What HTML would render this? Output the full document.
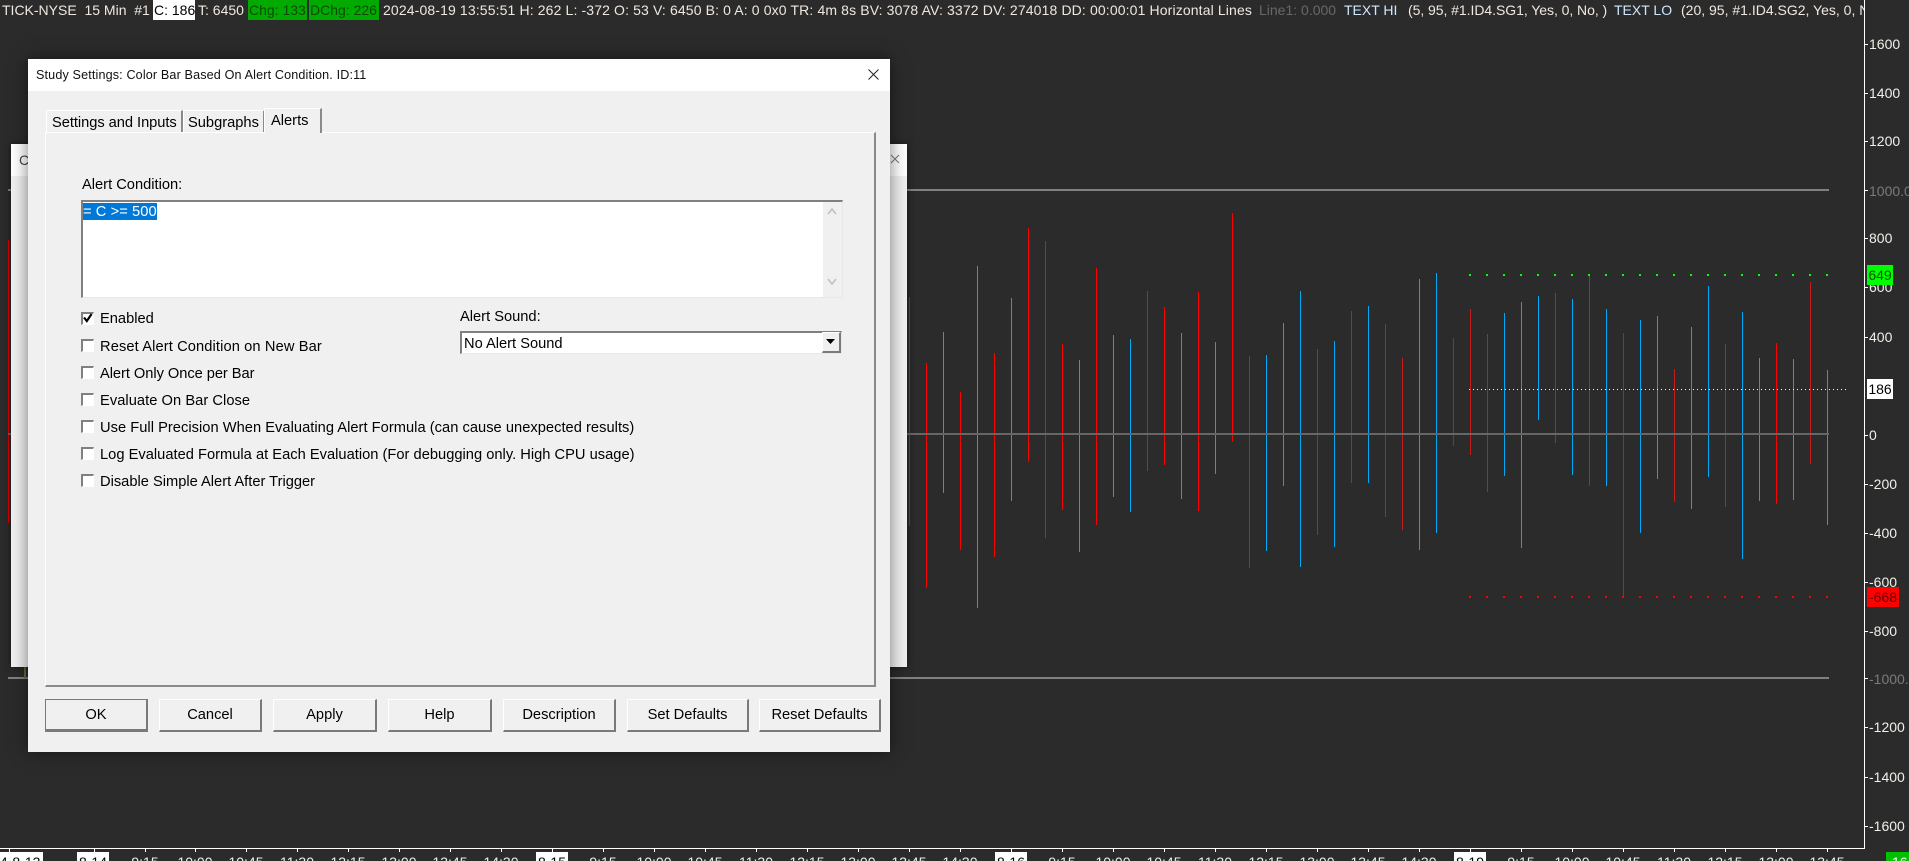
<!DOCTYPE html>
<html><head><meta charset="utf-8"><title>Study Settings</title>
<style>
html,body{margin:0;padding:0;background:#2b2b2b}
#p{position:relative;width:1909px;height:861px;overflow:hidden;background:#2b2b2b;font-family:"Liberation Sans",Arial,sans-serif;font-size:14px;color:#f0e8e0}
.t{position:absolute;white-space:pre;line-height:20px;height:20px}
.x{position:absolute;width:60px;margin-left:-30px;text-align:center;top:0;line-height:20px;color:#eee;height:20px}
.d{position:absolute;top:0;height:20px;background:#fff;color:#000;line-height:20px;text-align:center}
.y{position:absolute;left:1869px;line-height:20px;height:20px;color:#f0f0ea;white-space:pre}
.k{position:absolute;left:1865px;width:3px;height:1px;background:#fff}
.s{position:absolute;top:849px;width:1px;height:3px;background:#fff}
#dlg{position:absolute;left:28px;top:59px;width:862px;height:693px;background:#f0f0f0;box-shadow:0 0 16px rgba(0,0,0,.5);color:#000;font-size:14.67px}
#dlg .t{color:#000}
.l{position:absolute;left:53px;background:#fff;border-top:2px solid #808080;border-left:2px solid #808080;border-bottom:1px solid #fff;border-right:1px solid #fff;box-sizing:content-box;width:10px;height:10px}
.b{position:absolute;top:640px;height:33px;box-sizing:border-box;background:#f0f0f0;border:1px solid #fff;border-right:2px solid #7a7a7a;border-bottom:2px solid #7a7a7a;text-align:center;line-height:31px;white-space:pre}
.tab{position:absolute;box-sizing:border-box;border-top:1px solid #fff;border-left:1px solid #fff;border-right:2px solid #8a8a8a;background:#f0f0f0}
</style></head><body>
<div id="p">

<svg style="position:absolute;left:0;top:0" width="1909" height="861" shape-rendering="crispEdges" fill="none">
<path stroke="#e00000" d="M8.5 240V523"/>
<path stroke="#c81c1c" d="M909.5 297V526M1045.5 241V538M1147.5 291V471M1249.5 356V568M1317.5 349V535M1351.5 311V483M1385.5 324V517M1402.5 358V530M1470.5 309V455M1487.5 334V492M1555.5 293V443M1589.5 276V486M1674.5 369V502M1725.5 344V507M1810.5 282V464"/>
<path stroke="#ff0000" d="M926.5 363V588M960.5 392V550M994.5 353V557M1028.5 228V462M1062.5 344V510M1096.5 268V525M1164.5 307V465M1198.5 292V511M1232.5 213V442M1453.5 338V446M1623.5 333V597M1776.5 343V504"/>
<path stroke="#1a9ee0" d="M943.5 332V493M977.5 266V608M1011.5 298V501M1079.5 360V552M1113.5 335V497M1181.5 333V499M1215.5 342V474M1283.5 323V486"/>
<path stroke="#00a8f8" d="M1130.5 339V512M1266.5 355V551M1300.5 291V567M1334.5 341V547M1368.5 306V483M1419.5 279V550M1436.5 273V533M1504.5 313V476M1521.5 302V548M1538.5 296V420M1572.5 299V475M1606.5 309V486M1640.5 320V533M1657.5 316V479M1691.5 327V509M1708.5 286V477M1742.5 312V559M1759.5 358V501M1793.5 359V500M1827.5 370V525"/>
<path stroke="#808080" stroke-width="2" d="M8 190H1829M8 678H1829"/>
<path stroke="#666666" stroke-width="2" d="M8 434H1829"/>
<path stroke="#6b6b2a" stroke-width="2" d="M25 660V678"/>
<path stroke="#00ff00" stroke-width="2" stroke-dasharray="2 15" d="M1469 275H1829"/>
<path stroke="#ff0000" stroke-width="2" stroke-dasharray="2 15" d="M1469 597H1829"/>
<path stroke="#ffffff" stroke-dasharray="1 3" d="M1469 389.5H1846"/>
<path stroke="#ffffff" d="M1864.5 0V848M0 848.5H1865"/>
</svg>

<div class="t" style="left:2px;top:0">TICK-NYSE  15 Min  #1</div>
<div class="t" style="left:153px;top:0;width:42px;background:#fff;color:#000;padding-left:1px;box-sizing:border-box">C: 186</div>
<div class="t" style="left:198px;top:0">T: 6450</div>
<div class="t" style="left:248px;top:0;width:59px;background:#00aa00;color:#0b4a00;padding-left:1px;box-sizing:border-box">Chg: 133</div>
<div class="t" style="left:309px;top:0;width:70px;background:#00aa00;color:#0b4a00;padding-left:1px;box-sizing:border-box">DChg: 226</div>
<div class="t" style="left:383px;top:0;letter-spacing:.13px">2024-08-19 13:55:51 H: 262 L: -372 O: 53 V: 6450 B: 0 A: 0 0x0 TR: 4m 8s BV: 3078 AV: 3372 DV: 274018 DD: 00:00:01 Horizontal Lines</div>
<div class="t" style="left:1259px;top:0;color:#686868">Line1: 0.000</div>
<div class="t" style="left:1344px;top:0;color:#cfe8ff">TEXT HI</div>
<div class="t" style="left:1408px;top:0;letter-spacing:-.05px">(5, 95, #1.ID4.SG1, Yes, 0, No, )</div>
<div class="t" style="left:1614px;top:0;color:#cfe8ff">TEXT LO</div>
<div class="t" style="left:1681px;top:0;width:183px;overflow:hidden">(20, 95, #1.ID4.SG2, Yes, 0, No, )</div>

<div class="k" style="top:44px"></div><div class="y" style="top:34px">1600</div>
<div class="k" style="top:93px"></div><div class="y" style="top:83px">1400</div>
<div class="k" style="top:141px"></div><div class="y" style="top:131px">1200</div>
<div class="k" style="top:190px"></div><div class="y" style="top:181px;color:#7a7a7a">1000.0</div>
<div class="k" style="top:238px"></div><div class="y" style="top:228px">800</div>
<div class="k" style="top:287px"></div><div class="y" style="top:277px">600</div>
<div class="k" style="top:337px"></div><div class="y" style="top:327px">400</div>
<div class="k" style="top:435px"></div><div class="y" style="top:425px">0</div>
<div class="k" style="top:484px"></div><div class="y" style="top:474px">-200</div>
<div class="k" style="top:533px"></div><div class="y" style="top:523px">-400</div>
<div class="k" style="top:582px"></div><div class="y" style="top:572px">-600</div>
<div class="k" style="top:631px"></div><div class="y" style="top:621px">-800</div>
<div class="k" style="top:678px"></div><div class="y" style="top:669px;color:#7a7a7a">-1000.0</div>
<div class="k" style="top:727px"></div><div class="y" style="top:717px">-1200</div>
<div class="k" style="top:777px"></div><div class="y" style="top:767px">-1400</div>
<div class="k" style="top:826px"></div><div class="y" style="top:816px">-1600</div>

<div class="t" style="left:1867px;top:265px;width:26px;background:#00ff00;color:#064e06;text-align:center">649</div>
<div class="t" style="left:1867px;top:379px;width:26px;background:#fff;color:#000;text-align:center">186</div>
<div class="t" style="left:1867px;top:587px;width:32px;background:#ff0000;color:#6a0000;text-align:center">-668</div>
<div class="t" style="left:1886px;top:852px;width:23px;background:#00c000;color:#fff;padding-left:6px;box-sizing:border-box;line-height:20px;height:9px;overflow:hidden">16</div>

<div class="s" style="left:9px"></div><div class="s" style="left:94px"></div><div class="s" style="left:145px"></div><div class="s" style="left:195px"></div><div class="s" style="left:246px"></div><div class="s" style="left:297px"></div><div class="s" style="left:348px"></div><div class="s" style="left:399px"></div><div class="s" style="left:450px"></div><div class="s" style="left:501px"></div><div class="s" style="left:552px"></div><div class="s" style="left:603px"></div><div class="s" style="left:654px"></div><div class="s" style="left:705px"></div><div class="s" style="left:756px"></div><div class="s" style="left:807px"></div><div class="s" style="left:858px"></div><div class="s" style="left:909px"></div><div class="s" style="left:960px"></div><div class="s" style="left:1011px"></div><div class="s" style="left:1062px"></div><div class="s" style="left:1113px"></div><div class="s" style="left:1164px"></div><div class="s" style="left:1215px"></div><div class="s" style="left:1266px"></div><div class="s" style="left:1317px"></div><div class="s" style="left:1368px"></div><div class="s" style="left:1419px"></div><div class="s" style="left:1470px"></div><div class="s" style="left:1521px"></div><div class="s" style="left:1572px"></div><div class="s" style="left:1623px"></div><div class="s" style="left:1674px"></div><div class="s" style="left:1725px"></div><div class="s" style="left:1776px"></div><div class="s" style="left:1827px"></div>

<div style="position:absolute;left:0;top:852px;width:1864px;height:9px;overflow:hidden">
<div class="d" style="left:-26px;width:69px">2024-8-13</div>
<div class="d" style="left:77px;width:32px">8-14</div>
<div class="x" style="left:145px">9:15</div><div class="x" style="left:195px">10:00</div><div class="x" style="left:246px">10:45</div><div class="x" style="left:297px">11:30</div><div class="x" style="left:348px">12:15</div><div class="x" style="left:399px">13:00</div><div class="x" style="left:450px">13:45</div><div class="x" style="left:501px">14:30</div>
<div class="d" style="left:536px;width:32px">8-15</div>
<div class="x" style="left:603px">9:15</div><div class="x" style="left:654px">10:00</div><div class="x" style="left:705px">10:45</div><div class="x" style="left:756px">11:30</div><div class="x" style="left:807px">12:15</div><div class="x" style="left:858px">13:00</div><div class="x" style="left:909px">13:45</div><div class="x" style="left:960px">14:30</div>
<div class="d" style="left:995px;width:32px">8-16</div>
<div class="x" style="left:1062px">9:15</div><div class="x" style="left:1113px">10:00</div><div class="x" style="left:1164px">10:45</div><div class="x" style="left:1215px">11:30</div><div class="x" style="left:1266px">12:15</div><div class="x" style="left:1317px">13:00</div><div class="x" style="left:1368px">13:45</div><div class="x" style="left:1419px">14:30</div>
<div class="d" style="left:1454px;width:32px">8-19</div>
<div class="x" style="left:1521px">9:15</div><div class="x" style="left:1572px">10:00</div><div class="x" style="left:1623px">10:45</div><div class="x" style="left:1674px">11:30</div><div class="x" style="left:1725px">12:15</div><div class="x" style="left:1776px">13:00</div><div class="x" style="left:1827px">13:45</div>
</div>

<div style="position:absolute;left:11px;top:144px;width:896px;height:523px;background:#f0f0f0;box-shadow:0 0 6px rgba(0,0,0,.5)">
<div style="position:absolute;left:0;top:0;width:896px;height:32px;background:#fff"></div>
<div class="t" style="left:8px;top:6px;color:#444;font-size:14px">C</div>
<svg style="position:absolute;left:879px;top:10px" width="10" height="10" fill="none" stroke="#777"><path d="M1 1L9 9M9 1L1 9"/></svg>
</div>

<div id="dlg">
<div style="position:absolute;left:0;top:0;width:862px;height:32px;background:#fff"></div>
<div class="t" style="left:8px;top:6px;font-size:12.6px;letter-spacing:.14px;color:#111">Study Settings: Color Bar Based On Alert Condition. ID:11</div>
<svg style="position:absolute;left:840px;top:10px" width="11" height="11" fill="none" stroke="#222" stroke-width="1"><path d="M.5 .5L10.5 10.5M10.5 .5L.5 10.5"/></svg>

<div style="position:absolute;left:17px;top:73px;width:831px;height:555px;box-sizing:border-box;background:#f0f0f0;border-top:1px solid #fff;border-left:1px solid #fff;border-right:2px solid #8a8a8a;border-bottom:2px solid #8a8a8a"></div>
<div class="tab" style="left:18px;top:51px;width:137px;height:22px"></div>
<div class="t" style="left:24px;top:54px;letter-spacing:-.04px">Settings and Inputs</div>
<div class="tab" style="left:155px;top:51px;width:82px;height:22px"></div>
<div class="t" style="left:160px;top:54px">Subgraphs</div>
<div class="tab" style="left:236px;top:49px;width:58px;height:25px"></div>
<div class="t" style="left:243px;top:52px">Alerts</div>

<div class="t" style="left:54px;top:116px">Alert Condition:</div>
<div style="position:absolute;left:53px;top:141px;width:762px;height:98px;box-sizing:border-box;background:#fff;border-top:2px solid #808080;border-left:2px solid #808080;border-right:1px solid #e8e8e8;border-bottom:1px solid #e8e8e8"></div>
<div style="position:absolute;left:795px;top:143px;width:19px;height:95px;background:#f0f0f0"></div>
<svg style="position:absolute;left:799px;top:147px" width="10" height="80" fill="none" stroke="#c0c0c0" stroke-width="1.6"><path d="M1 8L5 3L9 8M1 73L5 78L9 73"/></svg>
<div class="t" style="left:55px;top:144px;width:74px;height:17px;line-height:18px;background:#0078d7;color:#fff;font-size:14.67px;letter-spacing:.08px">= C &gt;= 500</div>

<div class="l" style="top:253px"></div>
<svg style="position:absolute;left:55px;top:254px" width="10" height="10" fill="none" stroke="#000" stroke-width="2.2"><path d="M1 4.5L3.8 8L8.6 1"/></svg>
<div class="t" style="left:72px;top:250px">Enabled</div>
<div class="l" style="top:280px"></div><div class="t" style="left:72px;top:278px;letter-spacing:.11px">Reset Alert Condition on New Bar</div>
<div class="l" style="top:307px"></div><div class="t" style="left:72px;top:305px;letter-spacing:-.05px">Alert Only Once per Bar</div>
<div class="l" style="top:334px"></div><div class="t" style="left:72px;top:332px;letter-spacing:.05px">Evaluate On Bar Close</div>
<div class="l" style="top:361px"></div><div class="t" style="left:72px;top:359px;letter-spacing:.03px">Use Full Precision When Evaluating Alert Formula (can cause unexpected results)</div>
<div class="l" style="top:388px"></div><div class="t" style="left:72px;top:386px;letter-spacing:.015px">Log Evaluated Formula at Each Evaluation (For debugging only. High CPU usage)</div>
<div class="l" style="top:415px"></div><div class="t" style="left:72px;top:413px">Disable Simple Alert After Trigger</div>

<div class="t" style="left:432px;top:248px">Alert Sound:</div>
<div style="position:absolute;left:432px;top:272px;width:382px;height:23px;box-sizing:border-box;background:#fff;border-top:2px solid #808080;border-left:2px solid #808080;border-right:1px solid #e8e8e8;border-bottom:1px solid #e8e8e8"></div>
<div class="t" style="left:436px;top:275px">No Alert Sound</div>
<div style="position:absolute;left:794px;top:273px;width:19px;height:21px;box-sizing:border-box;background:#f0f0f0;border:1px solid #fff;border-right:2px solid #7a7a7a;border-bottom:2px solid #7a7a7a"></div>
<svg style="position:absolute;left:798px;top:280px" width="11" height="6"><path d="M0 0H9L4.5 5Z" fill="#000"/></svg>

<div class="b" style="left:17px;width:103px;border:1px solid #7a7a7a;border-right:2px solid #7a7a7a;border-bottom:3px solid #7a7a7a">OK</div>
<div class="b" style="left:131px;width:103px">Cancel</div>
<div class="b" style="left:245px;width:104px">Apply</div>
<div class="b" style="left:360px;width:104px">Help</div>
<div class="b" style="left:475px;width:113px">Description</div>
<div class="b" style="left:599px;width:122px">Set Defaults</div>
<div class="b" style="left:731px;width:122px">Reset Defaults</div>
</div>
</div>
</body></html>
